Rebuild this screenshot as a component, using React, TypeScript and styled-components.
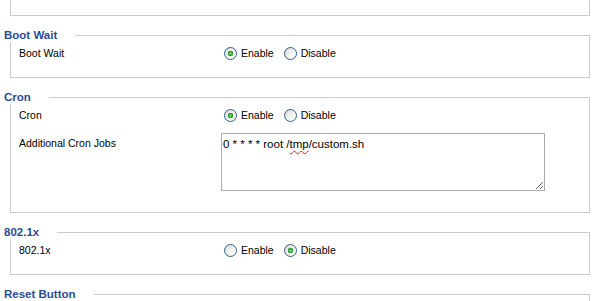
import React from "react";
import styled, { createGlobalStyle, css } from "styled-components";

const GlobalStyle = createGlobalStyle`
  body {
    margin: 0;
    background: #ffffff;
    font-family: "Liberation Sans", Arial, sans-serif;
    color: #000000;
  }
`;

const Page = styled.div`
  padding: 0 11px 0 10px;
`;

const Section = styled.fieldset<{ $cut?: boolean }>`
  margin: 0 0 12px;
  padding: 1px 8px 6px;
  border: 1px solid #cccccc;
  min-width: 0;
  min-height: 28px;
  ${(p) =>
    p.$cut &&
    css`
      border-top: none;
      height: 15px;
      min-height: 0;
      padding: 0;
    `}
`;

const Legend = styled.legend`
  margin-left: -15px;
  padding: 0 18px 0 0;
  font: bold 11.5px/14px "Liberation Sans", Arial, sans-serif;
  color: #2c4c94;
`;

const Setting = styled.div`
  display: flex;
  align-items: flex-start;
  min-height: 20px;
  margin-bottom: 8px;
  font-size: 10.5px;
  line-height: 20px;
`;

const Name = styled.div`
  flex: none;
  width: 202px;
`;

const Value = styled.div`
  display: flex;
  align-items: center;
  min-height: 20px;
`;

const Choice = styled.label`
  display: inline-flex;
  align-items: center;
  margin-right: 7px;
`;

const Radio = styled.input.attrs({ type: "radio" })`
  appearance: none;
  flex: none;
  width: 13px;
  height: 13px;
  margin: 0 4px 0 3px;
  border: 1px solid #2f5f8f;
  border-radius: 50%;
  box-sizing: border-box;
  background: linear-gradient(135deg, #d6d6d0 0%, #f4f4f2 55%, #ffffff 100%);

  &:checked {
    background:
      radial-gradient(circle at 50% 50%, #7ee07e 0, #2aa52a 2px, #1e961e 2.6px, transparent 3px),
      linear-gradient(135deg, #d6d6d0 0%, #f4f4f2 55%, #ffffff 100%);
  }
`;

const TextBox = styled.div`
  box-sizing: border-box;
  width: 324px;
  height: 58px;
  margin-bottom: 7px;
  padding: 3px 1px;
  border: 1px solid #a5acb2;
  font-size: 11.5px;
  line-height: 14px;
  overflow: auto;
  resize: both;
  white-space: pre;
`;

const Misspelled = styled.span`
  text-decoration: underline wavy #e02020;
  text-decoration-thickness: 1px;
  text-underline-offset: 2px;
`;

type Toggle = { name: string; on: boolean };

const EnableDisable = ({ name, on }: Toggle) => (
  <Value>
    <Choice>
      <Radio name={name} defaultChecked={on} />
      Enable
    </Choice>
    <Choice>
      <Radio name={name} defaultChecked={!on} />
      Disable
    </Choice>
  </Value>
);

const App = () => (
  <>
    <GlobalStyle />
    <Page>
      <Section $cut />

      <Section>
        <Legend>Boot Wait</Legend>
        <Setting>
          <Name>Boot Wait</Name>
          <EnableDisable name="boot_wait" on={true} />
        </Setting>
      </Section>

      <Section>
        <Legend>Cron</Legend>
        <Setting>
          <Name>Cron</Name>
          <EnableDisable name="cron_enable" on={true} />
        </Setting>
        <Setting>
          <Name>Additional Cron Jobs</Name>
          <TextBox role="textbox" aria-multiline="true">
            0 * * * * root /<Misspelled>tmp</Misspelled>/custom.sh
          </TextBox>
        </Setting>
      </Section>

      <Section>
        <Legend>802.1x</Legend>
        <Setting>
          <Name>802.1x</Name>
          <EnableDisable name="dot1x" on={false} />
        </Setting>
      </Section>

      <Section>
        <Legend>Reset Button</Legend>
      </Section>
    </Page>
  </>
);

export default App;
